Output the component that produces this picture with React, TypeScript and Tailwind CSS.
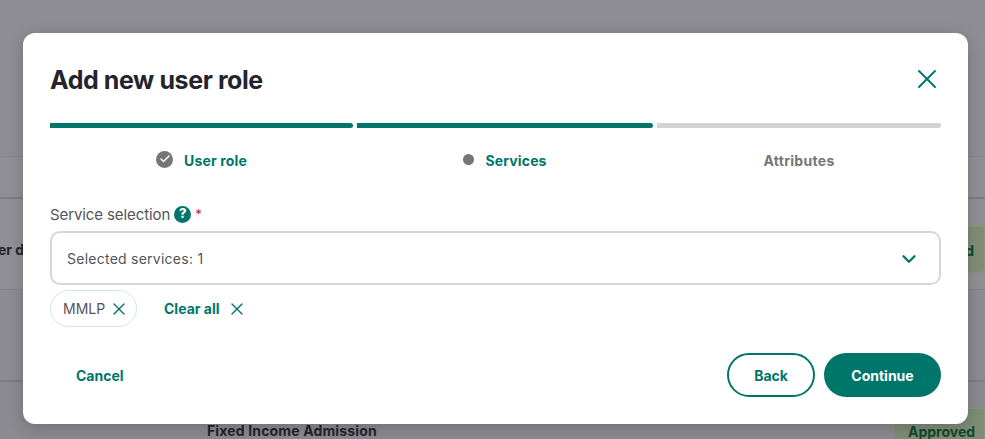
import React from 'react'
import { Check, ChevronDown, X } from 'lucide-react'

const App = () => {
	return (
		<div className="relative h-[439px] w-[985px] overflow-hidden bg-[#8e8d93] font-['Inter',sans-serif]">
			{/*Page behind the overlay*/}
			<div className="flex flex-col pt-[156px]">
				<div className="h-[41px] border-t border-[#88878d] bg-[#908f95]" />
				<div className="flex h-[92px] items-center justify-between border-t-2 border-[#7d7c82] bg-[#908f95] pt-[10px]">
					<span className="-ml-[2px] text-[14px] font-bold text-[#25242e]">er de</span>
					<span className="h-[47px] w-[92px] rounded-[4px] border border-[#7f9c6c] bg-[#7f8d78] pr-[10px] pt-[13px] text-right text-[14px] font-bold text-[#0f4a2c]">d</span>
				</div>
				<div className="h-[91px] border-t border-[#85848a] bg-[#8c8b91]" />
				<div className="flex h-[59px] justify-between border-t-2 border-[#7d7c82] bg-[#8b8a90]">
					<span className="ml-[207px] mt-[41px] text-[14px] font-bold leading-[16px] tracking-[0.15px] text-[#25242e]">Fixed Income Admission</span>
					<span className="mt-[26px] h-[46px] w-[92px] rounded-[4px] border border-[#7f9c6c] bg-[#7f8d78] pl-[14px] pt-[15px] text-[14px] font-bold leading-[16px] text-[#0f4a2c]">Approved</span>
				</div>
			</div>

			{/*Modal*/}
			<div className="absolute left-[23px] top-[33px] flex h-[391px] w-[945px] flex-col rounded-[12px] bg-white px-[27px] shadow-[0_4px_16px_rgba(0,0,0,0.2)]">
				<div className="flex h-[90px] items-center justify-between pt-[5px]">
					<h1 className="text-[25px] font-bold tracking-[-0.42px] text-[#25242e]">Add new user role</h1>
					<X className="-mr-[2px] -mt-[3px] text-[#00766a]" size={32} strokeWidth={1.5} />
				</div>

				{/*Steps*/}
				<div className="flex gap-[4px]">
					<div className="h-[5px] w-[303px] rounded-r-full bg-[#00766a]" />
					<div className="h-[5px] w-[296px] rounded-r-full bg-[#00766a]" />
					<div className="h-[5px] flex-1 rounded-r-full bg-[#d3d3d3]" />
				</div>
				<div className="mt-[22px] flex h-[20px] text-[14px] font-bold tracking-[0.15px]">
					<div className="flex w-[303px] items-center justify-center gap-[11px] text-[#00766a]">
						<span className="-mt-[2px] flex h-[17px] w-[17px] items-center justify-center rounded-full bg-[#767676]">
							<Check className="text-white" size={12} strokeWidth={3} />
						</span>
						User role
					</div>
					<div className="ml-[4px] flex w-[296px] items-center justify-center gap-[11px] text-[#00766a]">
						<span className="-mt-[2px] h-[11px] w-[11px] rounded-full bg-[#767676]" />
						Services
					</div>
					<div className="ml-[4px] flex flex-1 items-center justify-center tracking-[0.3px] text-[#767676]">Attributes</div>
				</div>

				{/*Service selection*/}
				<label className="mt-[35px] flex h-[20px] items-center text-[15px] tracking-[-0.1px] text-[#55545c]">
					Service selection
					<span className="-mt-[2px] ml-[4px] flex h-[17px] w-[17px] items-center justify-center rounded-full bg-[#00766a] text-[13px] font-extrabold text-white">?</span>
					<span className="ml-[4px] text-[13px] text-[#b8264a]">*</span>
				</label>
				<div className="mt-[6px] flex h-[54px] items-center justify-between rounded-[10px] border-2 border-[#d6d6d6] pl-[15px] pr-[19px] pt-[1px] text-[14px] tracking-[0.25px] text-[#55545c]">
					Selected services: 1
					<ChevronDown className="text-[#00766a]" size={22} strokeWidth={2.6} />
				</div>
				<div className="mt-[5px] flex items-center">
					<span className="flex h-[37px] w-[87px] items-center gap-[4px] rounded-full border border-[#cde7ef] pl-[12px] text-[14px] text-[#55545c]">
						MMLP
						<X className="text-[#00766a]" size={20} strokeWidth={1.6} />
					</span>
					<span className="ml-[27px] text-[14px] font-bold text-[#00766a]">Clear all</span>
					<X className="ml-[7px] text-[#00766a]" size={20} strokeWidth={1.6} />
				</div>

				{/*Actions*/}
				<div className="mt-[26px] flex items-center justify-between">
					<button className="ml-[26px] text-[14px] font-bold text-[#00766a]">Cancel</button>
					<div className="flex gap-[9px]">
						<button className="h-[44px] w-[88px] rounded-full border-2 border-[#00766a] text-[14px] font-bold text-[#00766a]">Back</button>
						<button className="h-[44px] w-[117px] rounded-full bg-[#00766a] text-[14px] font-bold text-white">Continue</button>
					</div>
				</div>
			</div>
		</div>
	)
}

export default App
